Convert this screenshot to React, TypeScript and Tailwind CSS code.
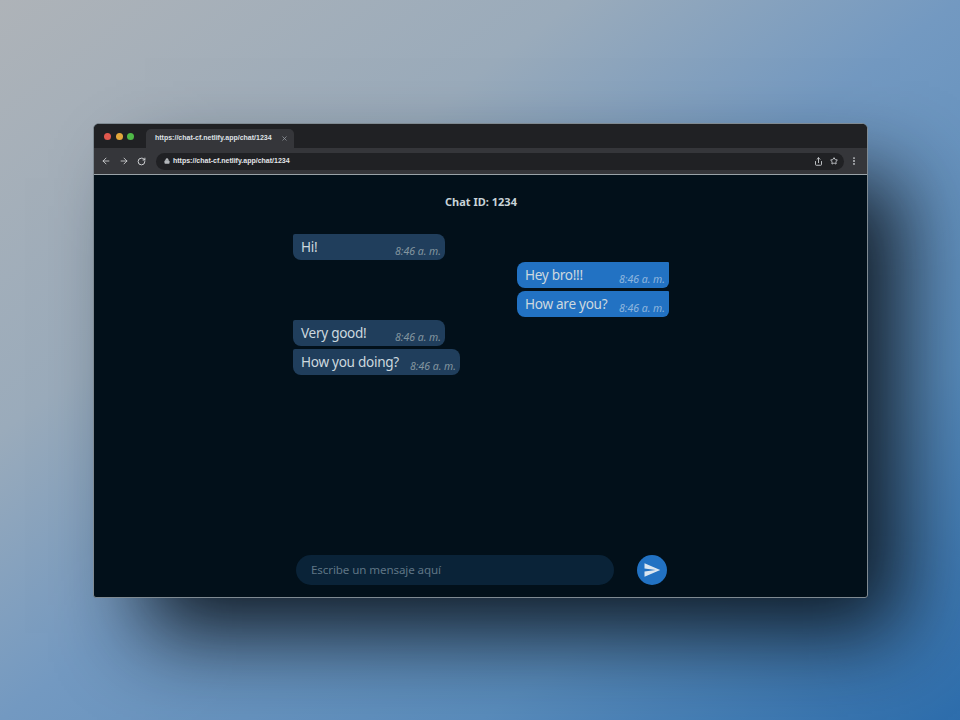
import { ArrowLeft, ArrowRight, Lock, MoreVertical, RotateCw, Share, Star, X } from "lucide-react";

type Message = {
  text: string;
  mine?: boolean;
  width: string;
};

const messages: Message[] = [
  { text: "Hi!", width: "w-[152px]" },
  { text: "Hey bro!!!", mine: true, width: "w-[152px]" },
  { text: "How are you?", mine: true, width: "w-[152px]" },
  { text: "Very good!", width: "w-[152px]" },
  { text: "How you doing?", width: "w-[167px]" },
];

function Bubble({ text, mine, width }: Message) {
  return (
    <div
      className={`flex h-[26px] items-start justify-between pl-2 pr-1 ${width} ${
        mine
          ? "self-end rounded-tl-[8px] rounded-bl-[8px] rounded-tr-[1px] rounded-br-[6px] bg-[#2272c3]"
          : "rounded-tl-[2px] rounded-tr-[8px] rounded-br-[8px] rounded-bl-[8px] bg-[#203e5c]"
      }`}
    >
      <span className="mt-[3px] text-[13.6px] leading-[20px] tracking-[-0.3px] text-[#ccd8df]">{text}</span>
      <span
        className={`mt-[10px] text-[10.5px] italic leading-[14px] ${mine ? "text-[#8fb6de]" : "text-[#83959f]"}`}
      >
        8:46 a. m.
      </span>
    </div>
  );
}

function BrowserChrome() {
  const url = "https://chat-cf.netlify.app/chat/1234";

  return (
    <div className="font-['Liberation_Sans',sans-serif]">
      <div className="flex h-[24px] bg-[#202124]">
        <div className="ml-[10px] flex items-start gap-[4.5px] pt-[8.5px]">
          <span className="h-[7px] w-[7px] rounded-full bg-[#e0584e]" />
          <span className="h-[7px] w-[7px] rounded-full bg-[#e2a73b]" />
          <span className="h-[7px] w-[7px] rounded-full bg-[#4fb947]" />
        </div>
        <div className="ml-[12px] mt-[5px] flex h-[19px] w-[148px] items-center justify-between rounded-t-[5px] bg-[#35363a] pl-[9px] pr-[6px]">
          <span className="text-[7px] font-bold text-[#dfe1e5]">{url}</span>
          <X className="h-[7px] w-[7px] text-[#9aa0a6]" strokeWidth={2.5} />
        </div>
      </div>
      <div className="flex h-[27px] items-center border-b border-[#9aa3a8] bg-[#35363a] pl-[7px] pr-[8px]">
        <ArrowLeft className="h-[10px] w-[10px] text-[#d5d7da]" strokeWidth={2} />
        <ArrowRight className="ml-[8px] h-[10px] w-[10px] text-[#d5d7da]" strokeWidth={2} />
        <RotateCw className="ml-[8px] h-[9px] w-[9px] text-[#d5d7da]" strokeWidth={2.5} />
        <div className="ml-[10px] flex h-[17px] flex-1 items-center rounded-full bg-[#202124] pl-[8px] pr-[6px]">
          <Lock className="h-[6px] w-[6px] fill-[#b5b8bc] text-[#b5b8bc]" strokeWidth={2} />
          <span className="ml-[3px] text-[7px] font-bold text-[#e3e5e8]">{url}</span>
          <Share className="ml-auto h-[9px] w-[9px] text-[#c4c7cb]" strokeWidth={2.5} />
          <Star className="ml-[7px] h-[8px] w-[8px] text-[#c4c7cb]" strokeWidth={3} />
        </div>
        <MoreVertical className="ml-[5px] h-[10px] w-[10px] text-[#c4c7cb]" strokeWidth={2.5} />
      </div>
    </div>
  );
}

export default function App() {
  return (
    <div className="h-[720px] w-[960px] overflow-hidden bg-[linear-gradient(to_bottom_right,#aeb3b8_0%,#9aabbb_30%,#7399c1_50%,#5a8dbd_75%,#2d6dac_100%)] pl-[93px] pt-[123px] font-['Noto_Sans',sans-serif] antialiased">
      <div className="flex h-[475px] w-[775px] flex-col overflow-hidden rounded-t-[6px] rounded-b-[3px] border border-[#7f8a92] bg-[#02101a] shadow-[42px_45px_80px_-10px_rgba(10,18,26,0.95)]">
        <BrowserChrome />

        <div className="flex flex-1 flex-col items-center">
          <h1 className="ml-[1px] mt-[19px] text-[11px] font-bold leading-[15px] text-[#c8d3d8]">Chat ID: 1234</h1>

          <div className="ml-[1px] mt-[24.5px] flex w-[376px] flex-col gap-[2.75px]">
            {messages.map((message) => (
              <Bubble key={message.text} {...message} />
            ))}
          </div>

          <div className="mb-[12px] ml-[1px] mt-auto flex w-[376px] items-center">
            <div className="ml-[3px] flex h-[30px] w-[318px] items-center rounded-full bg-[#0a2338] pl-[15px] text-[11.6px] tracking-[-0.1px] text-[#5f7585]">
              Escribe un mensaje aquí
            </div>
            <button
              type="button"
              className="ml-[23px] flex h-[30px] w-[30px] items-center justify-center rounded-full bg-[#2272c3]"
            >
              <svg viewBox="0 0 24 24" className="h-[18px] w-[18px] fill-[#dbe6f0]">
                <path d="M2.01 21 23 12 2.01 3 2 10l15 2-15 2z" />
              </svg>
            </button>
          </div>
        </div>
      </div>
    </div>
  );
}
